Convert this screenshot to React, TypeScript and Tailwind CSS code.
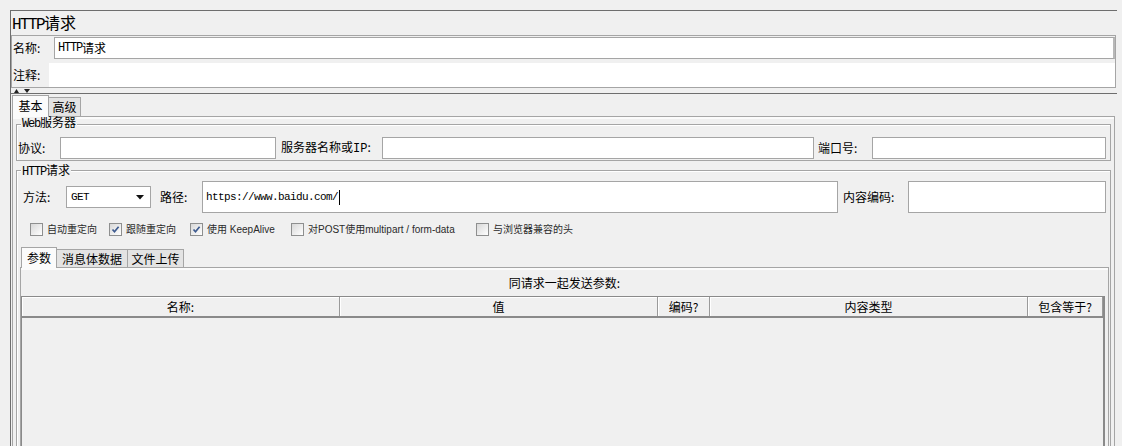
import { ReactNode } from 'react';

const mono = "font-['Liberation_Mono','Noto_Sans_CJK_SC',monospace]";

function Field({ w, h = 22, children }: { w: number | string; h?: number; children?: ReactNode }) {
  return (
    <div
      className={`bg-white border border-[#a5a5a5] flex items-center shrink-0 ${h === 32 ? 'h-[32px]' : 'h-[22px]'}`}
      style={{ width: w }}
    >
      {children}
    </div>
  );
}

function Check({ checked, label, w }: { checked?: boolean; label: string; w?: number }) {
  return (
    <div className="flex items-center h-[13px] shrink-0" style={w ? { width: w } : undefined}>
      <div className="w-[13px] h-[13px] border border-[#8e8f8f] bg-gradient-to-br from-[#d8d8d8] to-white flex items-center justify-center">
        {checked && (
          <svg width="11" height="11" viewBox="0 0 11 11">
            <path d="M2.5 5.5 L4.5 7.8 L8.6 2.8" stroke="#3d5a8f" strokeWidth="1.7" fill="none" />
          </svg>
        )}
      </div>
      <span className="ml-[4px] text-[10px] leading-[13px] text-[#2a2a2a] font-['Liberation_Sans','Noto_Sans_CJK_SC',sans-serif] whitespace-nowrap">
        {label}
      </span>
    </div>
  );
}

function HeadCell({ label, w }: { label: string; w: number }) {
  return (
    <div
      className="h-[19px] border-r border-[#9a9a9a] shadow-[inset_1px_1px_0_#ffffff] flex items-center justify-center text-[12px] leading-[19px] shrink-0"
      style={{ width: w }}
    >
      {label}
    </div>
  );
}

export default function App() {
  return (
    <div className="w-[1122px] h-[446px] overflow-hidden bg-[#f0f0f0] pt-[10px] pl-[10px] pr-[5px] text-black font-['Noto_Sans_CJK_SC',sans-serif]">
      <div className="border-t border-l border-[#6e6e6e]">
        {/* Title */}
        <div className="h-[24px] pl-[1px] pt-[1px] text-[16px] leading-[20px] whitespace-nowrap">
          <span className="font-['Liberation_Mono',monospace] tracking-[-1.6px]">HTTP</span>请求
        </div>

        {/* Name / comment */}
        <div className="mr-[1px] border border-[#a5a5a5]">
          <div className="h-[25px] pt-[1px] flex">
            <div className="w-[42px] pl-[1px] h-[22px] flex items-center text-[12px]">名称:</div>
            <div className="flex-1 h-[22px] bg-white border border-[#a5a5a5] border-r-2 border-r-[#b8b8b8] flex items-center pl-[3px]">
              <span className={`${mono} text-[12px] tracking-[-1.2px]`}>HTTP</span>
              <span className="text-[12px]">请求</span>
            </div>
          </div>
          <div className="mt-[2px] h-[24px] flex">
            <div className="w-[37px] pl-[1px] flex items-center text-[12px]">注释:</div>
            <div className="flex-1 bg-white" />
          </div>
        </div>

        {/* Split divider */}
        <div className="h-[5px] pl-[3px] pt-[1px]">
          <svg width="18" height="4" viewBox="0 0 18 4">
            <polygon points="0,4 2.5,0 5,4" fill="#222" />
            <polygon points="10,0 16,0 13,4" fill="#222" />
          </svg>
        </div>

        {/* Tabbed pane */}
        <div className="border-t border-[#6e6e6e]">
          <div className="h-[22px] pl-[1px] flex items-end">
            <div className="relative z-10 -mb-px w-[37px] h-[22px] border-t border-l border-r border-[#a5a5a5] bg-[#fbfbfb] text-[12px] leading-[20px] text-center">
              基本
            </div>
            <div className="w-[32px] h-[19px] border-t border-r border-[#a5a5a5] bg-[#e3e3e3] text-[12px] leading-[18px] text-center">
              高级
            </div>
          </div>

          <div className="ml-[1px] mr-[2px] border-t border-l border-r border-[#a5a5a5]">
            <div className="h-[2px] bg-[#fbfbfb]" />
            <div className="px-[3px] pt-[5px]">
              {/* Web server */}
              <div className="relative h-[37px] border border-[#a5a5a5] shadow-[inset_1px_1px_0_#ffffff]">
                <span className={`absolute left-[4px] -top-[8px] px-[1px] bg-[#f0f0f0] text-[12px] leading-[14px] ${mono} tracking-[-1.2px]`}>
                  Web<span className="tracking-normal">服务器</span>
                </span>
                <div className="pt-[12px] flex items-center">
                  <div className="w-[43px] pl-[1px] text-[12px]">协议:</div>
                  <Field w={216} />
                  <div className="w-[106px] pl-[5px] text-[12px] whitespace-nowrap">
                    服务器名称或<span className={mono}>IP</span>:
                  </div>
                  <Field w={432} />
                  <div className="w-[58px] pl-[4px] text-[12px]">端口号:</div>
                  <Field w={234} />
                </div>
              </div>

              {/* HTTP request */}
              <div className="relative mt-[9px] h-[320px] border-t border-l border-r border-[#a5a5a5] shadow-[inset_1px_1px_0_#ffffff]">
                <span className="absolute left-[4px] -top-[8px] px-[1px] bg-[#f0f0f0] text-[12px] leading-[14px] whitespace-nowrap">
                  <span className={`${mono} tracking-[-1.2px]`}>HTTP</span>请求
                </span>

                <div className="pt-[10px] h-[42px] flex items-center">
                  <div className="w-[49px] pl-[6px] text-[12px]">方法:</div>
                  <div className="w-[85px] h-[22px] bg-white border border-[#a5a5a5] flex items-center justify-between pl-[4px] pr-[6px] shrink-0">
                    <span className={`${mono} text-[11px] tracking-[-0.6px]`}>GET</span>
                    <svg width="8" height="5" viewBox="0 0 8 5">
                      <polygon points="0,0 8,0 4,4.5" fill="#111" />
                    </svg>
                  </div>
                  <div className="w-[51px] pl-[9px] text-[12px]">路径:</div>
                  <Field w={636} h={32}>
                    <span className={`pl-[3px] ${mono} text-[11px] tracking-[-0.6px]`}>https://www.baidu.com/</span>
                    <span className="ml-[1px] w-px h-[15px] bg-black" />
                  </Field>
                  <div className="w-[70px] pl-[5px] text-[12px]">内容编码:</div>
                  <Field w={198} h={32} />
                </div>

                <div className="mt-[10px] pl-[13px] flex">
                  <Check label="自动重定向" w={79} />
                  <Check label="跟随重定向" checked w={81} />
                  <Check label="使用 KeepAlive" checked w={101} />
                  <Check label="对POST使用multipart / form-data" w={185} />
                  <Check label="与浏览器兼容的头" />
                </div>

                {/* Sub tabs */}
                <div className="mt-[11px] ml-[4px] h-[20px] flex items-end">
                  <div className="relative z-10 -mb-px w-[36px] h-[21px] border-t border-l border-r border-[#a5a5a5] bg-[#fbfbfb] text-[12px] leading-[19px] text-center">
                    参数
                  </div>
                  <div className="w-[71px] h-[18px] border-t border-r border-[#a5a5a5] bg-[#e3e3e3] text-[12px] leading-[17px] text-center">
                    消息体数据
                  </div>
                  <div className="w-[56px] h-[18px] border-t border-r border-[#a5a5a5] bg-[#e3e3e3] text-[12px] leading-[17px] text-center">
                    文件上传
                  </div>
                </div>

                <div className="ml-[3px] mr-[1px] h-[200px] border-t border-l border-r border-[#a5a5a5]">
                  <div className="h-[2px] bg-[#fbfbfb]" />
                  <div className="h-[26px] text-[12px] leading-[26px] text-center">同请求一起发送参数:</div>
                  <div className="mr-[3px] h-[180px] border-t border-l border-r-2 border-[#8a8a8a]">
                    <div className="flex border-b-2 border-[#8a8a8a]">
                      <HeadCell label="名称:" w={318} />
                      <HeadCell label="值" w={318} />
                      <HeadCell label="编码?" w={52} />
                      <HeadCell label="内容类型" w={318} />
                      <HeadCell label="包含等于?" w={75} />
                    </div>
                  </div>
                </div>
              </div>
            </div>
          </div>
        </div>
      </div>
    </div>
  );
}
